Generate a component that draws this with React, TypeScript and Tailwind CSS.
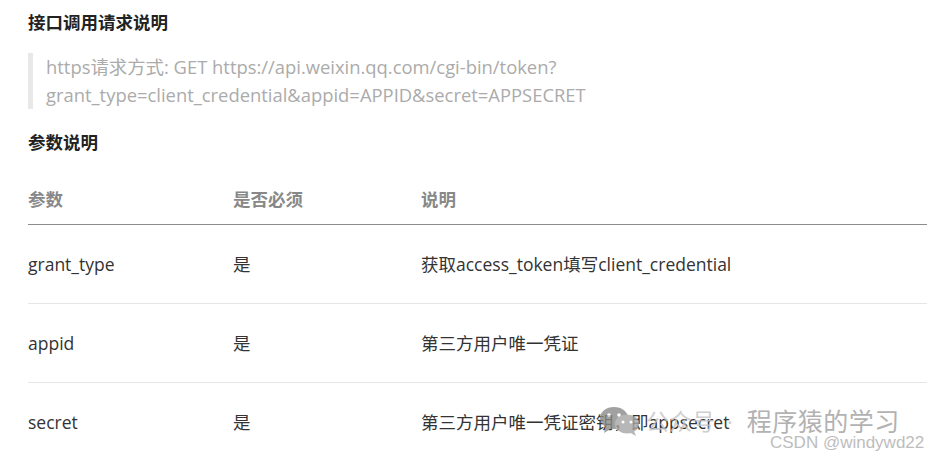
const font = { fontFamily: '"Open Sans", "Noto Sans CJK SC", sans-serif' }

const rows = [
  { name: "grant_type", required: "是", desc: "获取access_token填写client_credential" },
  { name: "appid", required: "是", desc: "第三方用户唯一凭证" },
  { name: "secret", required: "是", desc: "第三方用户唯一凭证密钥，即appsecret" },
]

const WechatIcon = () => (
  <svg width="44" height="30" viewBox="0 0 44 30">
    <ellipse cx="16" cy="12" rx="14" ry="11" fill="#8a8a8a" />
    <path d="M8 20 L6 27 L14 22 Z" fill="#8a8a8a" />
    <ellipse cx="29" cy="18" rx="12" ry="9.5" fill="#a6a6a6" />
    <path d="M36 25 L38 30 L31 26 Z" fill="#a6a6a6" />
    <circle cx="11" cy="9" r="1.8" fill="#fff" />
    <circle cx="21" cy="9" r="1.8" fill="#fff" />
    <circle cx="25" cy="16" r="1.5" fill="#fff" />
    <circle cx="33" cy="16" r="1.5" fill="#fff" />
  </svg>
)

export default function App() {
  return (
    <div className="relative w-[927px] h-[459px] overflow-hidden bg-white pl-[28px] pt-[10px]" style={font}>
      <h3 className="text-[17.5px] leading-[24px] font-bold text-[#222]">接口调用请求说明</h3>

      <blockquote className="mt-[19px] border-l-[5px] border-[#e8e8e8] pl-[13px] text-[18.4px] leading-[28px] text-[#ababab]">
        <p>https请求方式: GET https://api.weixin.qq.com/cgi-bin/token?</p>
        <p>grant_type=client_credential&amp;appid=APPID&amp;secret=APPSECRET</p>
      </blockquote>

      <h3 className="mt-[21px] text-[17.5px] leading-[24px] font-bold text-[#222]">参数说明</h3>

      <div className="mt-[21px]">
        <div className="grid grid-cols-[205px_188px_1fr] h-[50px] items-center border-b border-[#8c8c8c] text-[17.5px] font-bold text-[#888]">
          <span>参数</span>
          <span>是否必须</span>
          <span>说明</span>
        </div>
        {rows.map((r, i) => (
          <div
            key={r.name}
            className={`grid grid-cols-[205px_188px_1fr] h-[79px] items-center text-[17.5px] text-[#333] ${i < rows.length - 1 ? "border-b border-[#e6e6e6]" : ""}`}
          >
            <span>{r.name}</span>
            <span>{r.required}</span>
            <span>{r.desc}</span>
          </div>
        ))}
      </div>

      {/* watermark */}
      <div className="absolute left-[598px] top-[406px] flex items-center leading-none opacity-80">
        <WechatIcon />
        <span className="ml-[4px] text-[23px] text-[#c4c4c4]">公众号</span>
        <span className="ml-[12px] mr-[14px] text-[22px] text-[#c4c4c4]">·</span>
        <span className="text-[25px] tracking-[0.5px] text-[#a0a0a0]">程序猿的学习</span>
      </div>
      <div className="absolute left-[770px] top-[434px] text-[17px] leading-[18px] text-[#bdbdbd]" style={{ fontFamily: '"Liberation Sans", sans-serif' }}>
        CSDN @windywd22
      </div>
    </div>
  )
}
